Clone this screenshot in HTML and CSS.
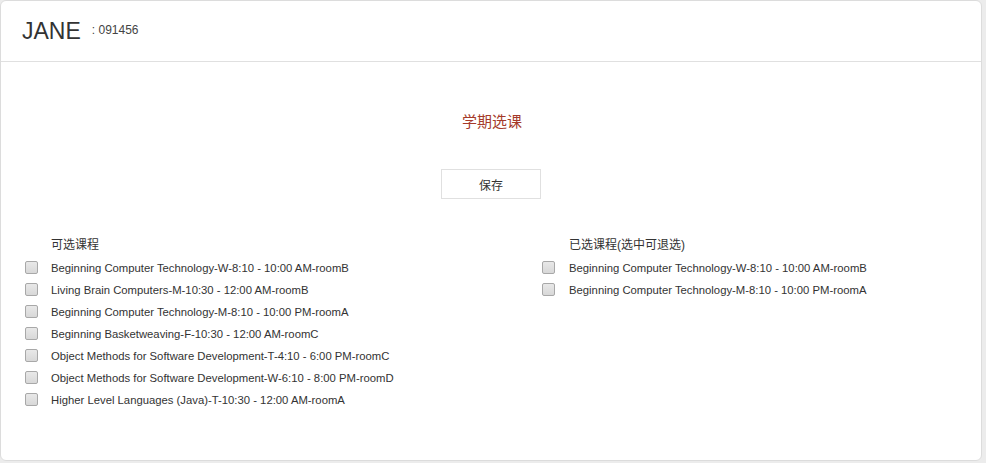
FILE: index.html
```html
<!DOCTYPE html>
<html>
<head>
<meta charset="utf-8">
<link rel="stylesheet" href="styles.css">
</head>
<body>
<div class="panel">
  <div class="panel-head">
    <span class="name">JANE</span>
    <span class="sid">: 091456</span>
  </div>
  <div class="panel-body">
    <div class="title">学期选课</div>
    <div class="actions"><button class="btn">保存</button></div>
    <div class="cols">
      <div class="col">
        <div class="col-label">可选课程</div>
        <label class="row"><input type="checkbox"><span>Beginning Computer Technology-W-8:10 - 10:00 AM-roomB</span></label>
        <label class="row"><input type="checkbox"><span>Living Brain Computers-M-10:30 - 12:00 AM-roomB</span></label>
        <label class="row"><input type="checkbox"><span>Beginning Computer Technology-M-8:10 - 10:00 PM-roomA</span></label>
        <label class="row"><input type="checkbox"><span>Beginning Basketweaving-F-10:30 - 12:00 AM-roomC</span></label>
        <label class="row"><input type="checkbox"><span>Object Methods for Software Development-T-4:10 - 6:00 PM-roomC</span></label>
        <label class="row"><input type="checkbox"><span>Object Methods for Software Development-W-6:10 - 8:00 PM-roomD</span></label>
        <label class="row"><input type="checkbox"><span>Higher Level Languages (Java)-T-10:30 - 12:00 AM-roomA</span></label>
      </div>
      <div class="col col-right">
        <div class="col-label">已选课程(选中可退选)</div>
        <label class="row"><input type="checkbox"><span>Beginning Computer Technology-W-8:10 - 10:00 AM-roomB</span></label>
        <label class="row"><input type="checkbox"><span>Beginning Computer Technology-M-8:10 - 10:00 PM-roomA</span></label>
      </div>
    </div>
  </div>
</div>
</body>
</html>
```

FILE: styles.css
```css
html, body {
  margin: 0;
  padding: 0;
  background: #ececec;
}
body {
  font-family: "Liberation Sans", Arial, "Noto Sans CJK SC", sans-serif;
  color: #333;
  font-size: 11.3px;
}
.panel {
  box-sizing: border-box;
  width: 982px;
  height: 461px;
  background: #fff;
  border: 1px solid #dcdcdc;
  border-radius: 6px;
}
.panel-head {
  height: 60px;
  border-bottom: 1px solid #e0e0e0;
  display: flex;
  align-items: center;
  padding-left: 21px;
}
.name {
  font-size: 23px;
  color: #333;
  margin-right: 11px;
  line-height: 1;
}
.sid {
  font-size: 12px;
  color: #444;
  margin-top: -3px;
}
.panel-body {
  padding-top: 50px;
}
.title {
  text-align: center;
  font-size: 15px;
  color: #a53a2a;
  line-height: 20px;
  padding-left: 2px;
}
.actions {
  display: flex;
  justify-content: center;
  margin-top: 37px;
}
.btn {
  box-sizing: border-box;
  width: 100px;
  height: 30px;
  background: #fff;
  border: 1px solid #e0e0e0;
  font-family: "Liberation Sans", Arial, "Noto Sans CJK SC", sans-serif;
  font-size: 12px;
  color: #333;
  padding: 0;
}
.cols {
  display: grid;
  grid-template-columns: 517px 1fr;
  padding-left: 24px;
  margin-top: 36px;
}
.col-label {
  padding-left: 26px;
  line-height: 20px;
  margin-bottom: 2px;
  font-size: 12px;
}
.col-right .col-label {
  padding-left: 27px;
}
.col-right .row input {
  margin-right: 14px;
}
.row {
  display: flex;
  align-items: center;
  height: 22px;
}
.row input {
  appearance: none;
  -webkit-appearance: none;
  box-sizing: border-box;
  width: 13px;
  height: 13px;
  margin: 0 13px 0 0;
  border: 1px solid #a8a8a8;
  border-radius: 2px;
  background: linear-gradient(#e8e8e8, #d8d8d8);
  flex: none;
  position: relative;
  top: -1px;
}
.row span {
  line-height: 22px;
}
```
